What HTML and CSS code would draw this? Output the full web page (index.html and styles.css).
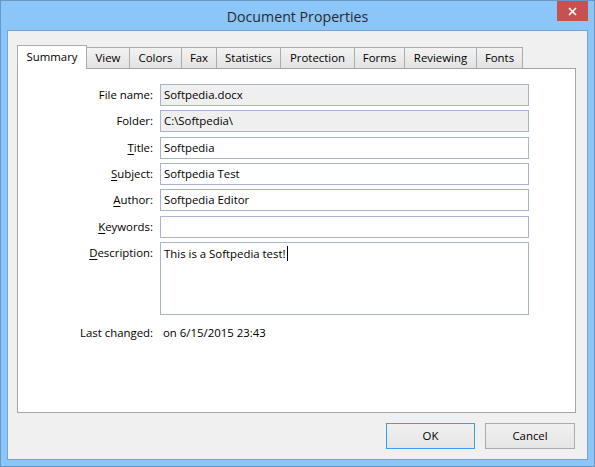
FILE: index.html
```html
<!DOCTYPE html>
<html>
<head>
<meta charset="utf-8">
<link rel="stylesheet" href="styles.css">
</head>
<body>
<div class="window">
  <div class="titlebar">
    <span class="tb-spacer"></span>
    <span class="title">Document Properties</span>
    <span class="close"><svg width="9" height="9" viewBox="0 0 9 9"><path d="M1 1 L8 8 M8 1 L1 8" stroke="#fff" stroke-width="1.7" fill="none"/></svg></span>
  </div>
  <div class="client">
    <div class="tabs">
      <div class="tab active">Summary</div>
      <div class="tab">View</div>
      <div class="tab">Colors</div>
      <div class="tab">Fax</div>
      <div class="tab">Statistics</div>
      <div class="tab">Protection</div>
      <div class="tab">Forms</div>
      <div class="tab">Reviewing</div>
      <div class="tab">Fonts</div>
    </div>
    <div class="panel">
      <div class="form">
        <span class="label">File name:</span><div class="field ro">Softpedia.docx</div>
        <span class="label">Folder:</span><div class="field ro">C:\Softpedia\</div>
        <span class="label"><u>T</u>itle:</span><div class="field">Softpedia</div>
        <span class="label"><u>S</u>ubject:</span><div class="field">Softpedia Test</div>
        <span class="label"><u>A</u>uthor:</span><div class="field">Softpedia Editor</div>
        <span class="label"><u>K</u>eywords:</span><div class="field"></div>
        <span class="label"><u>D</u>escription:</span><div class="field area">This is a Softpedia test!<span class="caret"></span></div>
      </div>
      <div class="changed">
        <span class="label">Last changed:</span><span class="value">on 6/15/2015 23:43</span>
      </div>
    </div>
    <div class="buttons">
      <div class="btn default">OK</div>
      <div class="btn">Cancel</div>
    </div>
  </div>
</div>
</body>
</html>
```
FILE: styles.css
```css
* { box-sizing: border-box; }
html, body { margin: 0; padding: 0; }
body {
  font-family: "Open Sans", "Noto Sans", sans-serif;
  font-size: 11.4px;
  color: #000;
}
.window {
  width: 595px;
  height: 467px;
  border: 1px solid #6a97c4;
  background: #8cc5f8;
  padding: 0 6px 6px 6px;
  display: flex;
  flex-direction: column;
}
.titlebar {
  height: 29px;
  display: grid;
  grid-template-columns: 31px 1fr 31px;
  align-items: start;
}
.title {
  align-self: center;
  text-align: center;
  font-size: 14.2px;
  color: #2a2a2a;
  line-height: 29px;
  padding-top: 1px;
}
.close {
  width: 31px;
  height: 20px;
  background: #c75050;
  display: flex;
  align-items: center;
  justify-content: center;
}
.client {
  flex: 1;
  border: 1px solid #7aa3cc;
  background: #f0f0f0;
  padding: 14px 11px 10px 9px;
  display: flex;
  flex-direction: column;
}
.tabs {
  height: 23px;
  display: flex;
  align-items: flex-end;
}
.tab {
  height: 21px;
  border: 1px solid #acacac;
  border-bottom: none;
  background: linear-gradient(#f2f2f2, #e3e3e3);
  text-align: center;
  line-height: 19px;
  margin-left: -1px;
  color: #000;
}
.tab.active {
  height: 24px;
  margin-bottom: -1px;
  background: #fff;
  position: relative;
  z-index: 1;
  margin-left: 0;
  line-height: 22px;
}
.tab:nth-child(1) { width: 70px; }
.tab:nth-child(2) { width: 44px; }
.tab:nth-child(3) { width: 53px; }
.tab:nth-child(4) { width: 36px; }
.tab:nth-child(5) { width: 65px; }
.tab:nth-child(6) { width: 75px; }
.tab:nth-child(7) { width: 51px; }
.tab:nth-child(8) { width: 73px; }
.tab:nth-child(9) { width: 47px; }
.panel {
  flex: 1;
  background: #fff;
  border: 1px solid #a6a6a6;
  padding-top: 15px;
}
.form {
  display: grid;
  grid-template-columns: 135px 369px;
  column-gap: 7px;
  row-gap: 4.34px;
}
.label {
  text-align: right;
  line-height: 22px;
  align-self: start;
  white-space: nowrap;
}
.label u { text-decoration-thickness: 1px; text-underline-offset: 2px; }
.field {
  height: 22px;
  border: 1px solid #a9b4cc;
  background: #fff;
  padding: 0 3px;
  line-height: 20px;
  white-space: nowrap;
}
.field.ro { background: #efefef; }
.field.area {
  height: 73px;
  padding-top: 1px;
}
.caret {
  display: inline-block;
  width: 1px;
  height: 15px;
  background: #000;
  vertical-align: -3px;
  margin-left: 1px;
}
.changed {
  display: grid;
  grid-template-columns: 135px 1fr;
  column-gap: 10px;
  margin-top: 10px;
}
.changed .label, .changed .value { line-height: 16px; }
.buttons {
  display: flex;
  justify-content: flex-end;
  gap: 10px;
  padding-top: 10px;
  padding-right: 1px;
}
.btn {
  width: 90px;
  height: 26px;
  border: 1px solid #acacac;
  background: linear-gradient(#f0f0f0, #e5e5e5);
  text-align: center;
  line-height: 24px;
}
.btn.default {
  width: 89px;
  border-color: #3c9bf6;
}
```
